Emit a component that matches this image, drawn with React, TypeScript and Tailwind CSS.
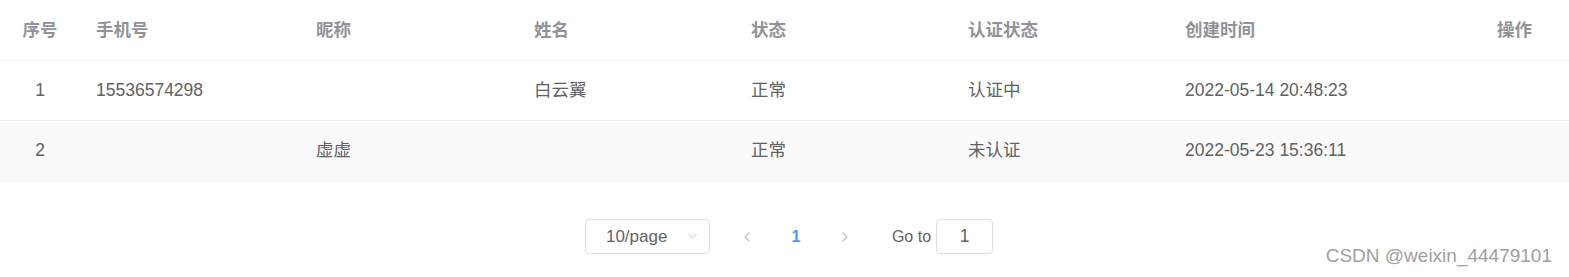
import React from 'react';
import { ChevronDown, ChevronLeft, ChevronRight } from 'lucide-react';

const COLS = 'grid grid-cols-[80px_220px_218px_217px_217px_217px_217px_1fr]';

const ROWS = [
  { idx: 1, phone: '15536574298', nick: '', name: '白云翼', status: '正常', auth: '认证中', created: '2022-05-14 20:48:23' },
  { idx: 2, phone: '', nick: '虚虚', name: '', status: '正常', auth: '未认证', created: '2022-05-23 15:36:11' },
];

const HEADERS = ['手机号', '昵称', '姓名', '状态', '认证状态', '创建时间'];

export default function App() {
  return (
    <div
      className="relative w-[1569px] h-[277px] bg-white overflow-hidden text-[17.5px]"
      style={{ fontFamily: '"Liberation Sans", "Noto Sans CJK SC", sans-serif' }}
    >
      {/* Table header */}
      <div className={`${COLS} h-[61px] items-center border-b border-[#ebeef5] text-[#909399] font-bold`}>
        <div className="text-center">序号</div>
        {HEADERS.map((h) => (
          <div key={h} className="px-4">{h}</div>
        ))}
        <div className="text-right pr-[37px]">操作</div>
      </div>

      {/* Table body */}
      {ROWS.map((r, i) => (
        <div
          key={r.idx}
          className={`${COLS} h-[60px] items-center border-b border-[#ebeef5] text-[#606266] ${i % 2 === 1 ? 'bg-[#fafafa]' : 'bg-white'}`}
        >
          <div className="text-center">{r.idx}</div>
          <div className="px-4">{r.phone}</div>
          <div className="px-4">{r.nick}</div>
          <div className="px-4">{r.name}</div>
          <div className="px-4">{r.status}</div>
          <div className="px-4">{r.auth}</div>
          <div className="px-4">{r.created}</div>
          <div />
        </div>
      ))}

      {/* Pagination */}
      <div className="flex items-center justify-center pt-[38px] pl-[9px] text-[#606266]">
        <div className="flex items-center w-[125px] h-[35px] border border-[#dcdfe6] rounded-[4px] pl-[20px] pr-[9px]">
          <span className="flex-1 text-[17px]">10/page</span>
          <ChevronDown className="w-[15px] h-[15px] text-[#c0c4cc]" strokeWidth={1.5} />
        </div>
        <div className="flex items-center ml-[29px]">
          <ChevronLeft className="w-[16px] h-[16px] text-[#c0c4cc]" strokeWidth={2} />
          <span className="w-[82px] text-center text-[#409eff] font-bold text-[16px]">1</span>
          <ChevronRight className="w-[16px] h-[16px] text-[#c0c4cc]" strokeWidth={2} />
        </div>
        <span className="ml-[39px] text-[16px]">Go to</span>
        <div className="ml-[5px] w-[57px] h-[35px] border border-[#dcdfe6] rounded-[4px] flex items-center justify-center text-[17.5px]">
          1
        </div>
      </div>

      {/* Watermark */}
      <div className="absolute right-[17px] bottom-[7px] text-[19px] text-[#a0a0a0]">
        CSDN @weixin_44479101
      </div>
    </div>
  );
}
